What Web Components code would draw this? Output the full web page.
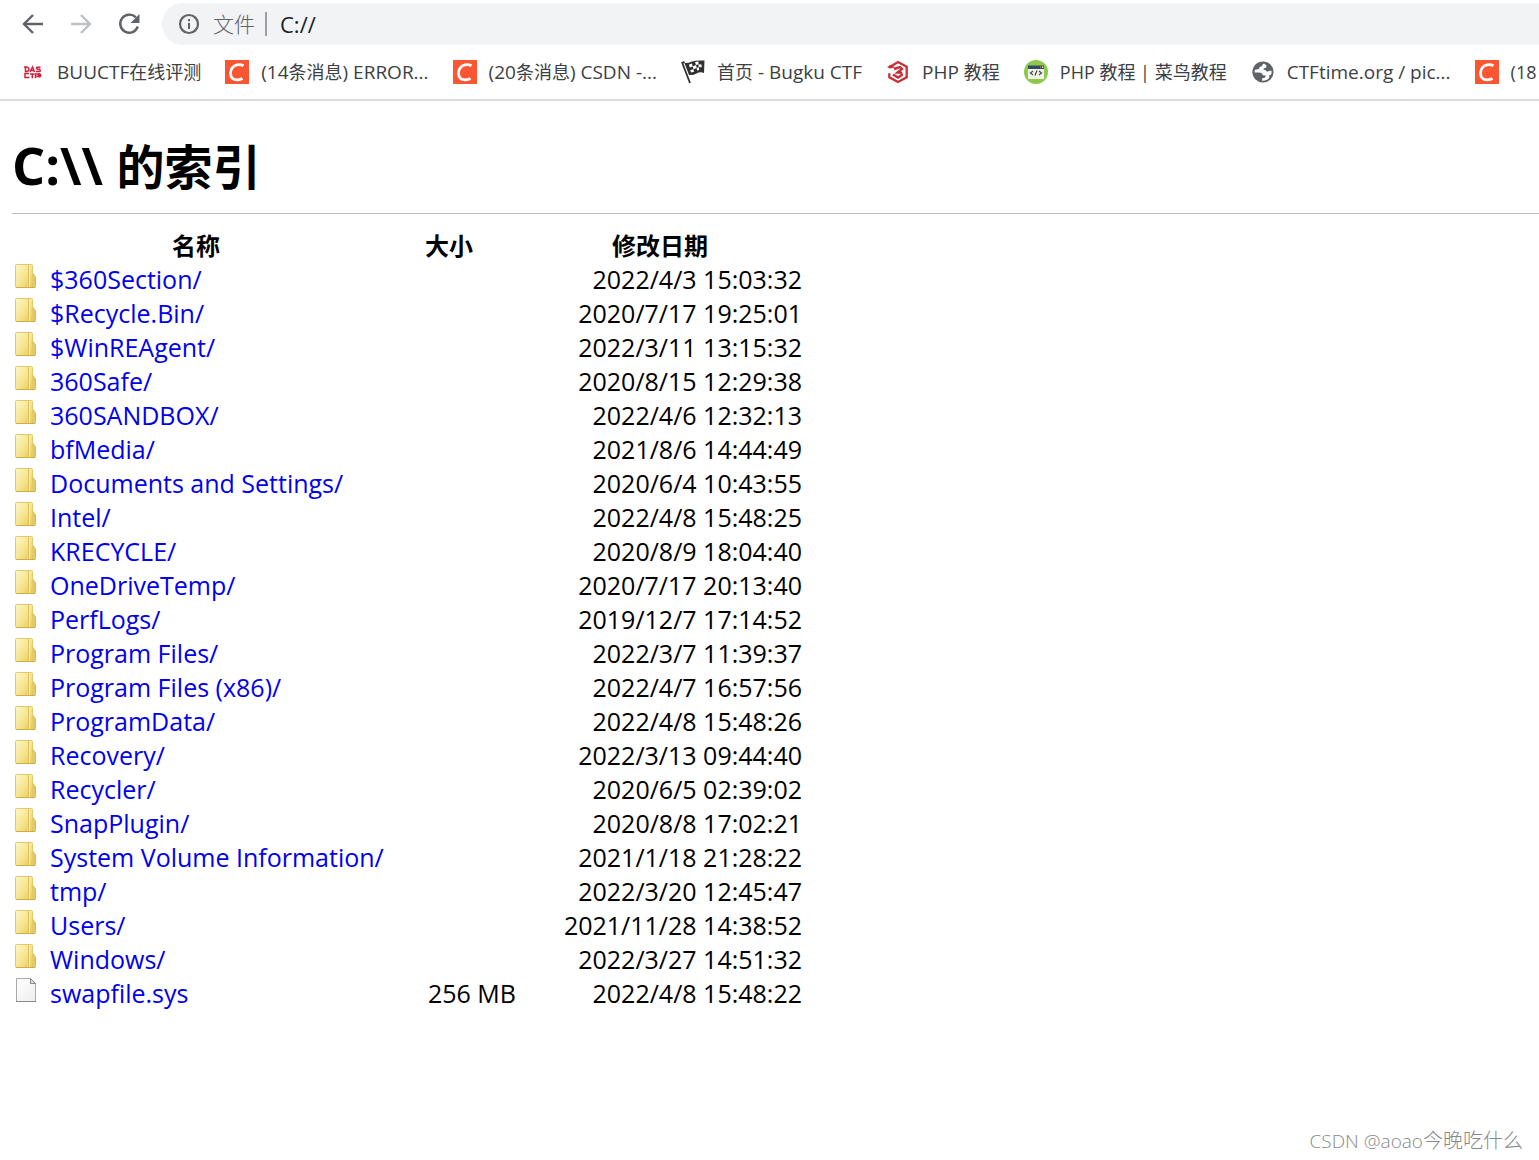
<!DOCTYPE html>
<html lang="zh-CN">
<head>
<meta charset="utf-8">
<title>C:\\ 的索引</title>
<style>
html, body { margin: 0; }
body { background: #fff; color: #000; font-family: "Open Sans", "Noto Sans CJK SC", sans-serif; }
.latin { font-size: 52px; }
.cjk { font-size: 20px; }
bookmark-item span { font-size: 18px; }
</style>
</head>
<body>
<browser-page>
  <browser-toolbar slot="chrome"></browser-toolbar>
  <bookmarks-bar slot="chrome">
    <bookmark-item icon="das">BUUCTF<span>在线评测</span></bookmark-item>
    <bookmark-item icon="csdn">(14<span>条消息</span>) ERROR...</bookmark-item>
    <bookmark-item icon="csdn">(20<span>条消息</span>) CSDN -...</bookmark-item>
    <bookmark-item icon="flag"><span>首页</span> - Bugku CTF</bookmark-item>
    <bookmark-item icon="three">PHP <span>教程</span></bookmark-item>
    <bookmark-item icon="code"><span>PHP 教程 | 菜鸟教程</span></bookmark-item>
    <bookmark-item icon="globe">CTFtime.org / pic...</bookmark-item>
    <bookmark-item icon="csdn"><span>(18</span></bookmark-item>
  </bookmarks-bar>
  <directory-listing><span class="latin">C:\\ </span>的索引</directory-listing>
  <page-watermark slot="footer">CSDN @aoao<span class="cjk">今晚吃什么</span></page-watermark>
</browser-page>
<script>
const define = (name, html) => customElements.define(name, class extends HTMLElement {
  connectedCallback() {
    if (this.shadowRoot) return;
    const root = this.attachShadow({ mode: 'open' });
    root.innerHTML = typeof html === 'function' ? html(this) : html;
  }
});

define('browser-page', `
<style>
:host { display: flex; flex-direction: column; min-height: 100vh; overflow: hidden; }
main { flex: 1; padding: 0 0 0 12px; }
</style>
<header><slot name="chrome"></slot></header>
<main><slot></slot></main>
<slot name="footer"></slot>`);

define('browser-toolbar', `
<style>
:host { display: flex; align-items: center; gap: 19px; padding: 3px 0 0 19px; height: 42px; }
button { border: 0; padding: 0; background: none; width: 28px; height: 28px; color: #5f6368; display: block; }
button:disabled { color: #bdc1c6; }
svg { display: block; }
nav { display: flex; gap: 20px; }
form { flex: 1; display: flex; align-items: center; height: 42px; background: #f1f3f4; border-radius: 21px 0 0 21px; padding-left: 16px; color: #5f6368; font-size: 21px; }
form svg { margin-right: 13px; }
label { line-height: 28px; white-space: nowrap; font-weight: 300; }
i { width: 2px; height: 24px; background: #9aa0a6; margin: 0 13px 0 10px; }
input { flex: 1; min-width: 0; border: 0; padding: 0; background: none; font: inherit; font-size: 22px; color: #202124; outline: 0; height: 28px; }
</style>
<nav>
<button aria-label="后退"><svg width="28" height="28" fill="none" stroke="currentColor" stroke-width="2.4"><path d="M24 14H5.5M14 5l-9 9 9 9"/></svg></button>
<button aria-label="前进" disabled><svg width="28" height="28" fill="none" stroke="currentColor" stroke-width="2.4"><path d="M4 14h18.500M14 5l9 9-9 9"/></svg></button>
<button aria-label="刷新"><svg width="28" height="28" fill="none" stroke="currentColor" stroke-width="2.4"><path d="M22.800 16.500a9 9 0 1 1-2-9"/><path d="M24.500 4v9h-9z" fill="currentColor" stroke="none"/></svg></button>
</nav>
<form>
<svg width="22" height="22" fill="none" stroke="#5f6368"><circle cx="11" cy="11" r="9" stroke-width="2.200"/><path d="M11 10v6M11 6v2.200" stroke-width="2"/></svg>
<label for="url">文件</label><i></i><input id="url" value="C://">
</form>`);

define('bookmarks-bar', `
<style>
:host { display: flex; align-items: center; gap: 24px; height: 54px; padding-left: 21px; border-bottom: 2px solid #dadce0; overflow: hidden; }
</style><slot></slot>`);

const icons = {
  das: `<g fill="none" stroke="#cf1f3c" stroke-width="1.500"><path d="M4.500 7v4.500h1.500q2-.5 2-2.200T6 7H3M9 12l2.500-5L13.500 12M10 10.500h3M19.500 7.300h-3.500q-1 1.700.5 2h2q1.500 1.500 0 2.300H15"/><path d="M8 13.500H4v4h4.500M9 14h4.500M11.300 14v4.200M14.500 18.200V14h4q2 1.200 0 2.500h-3"/></g><circle cx="18.500" cy="15.500" r="2" fill="#cf1f3c"/>`,
  csdn: `<path fill="#fc5531" d="M0 0h24v24H0z"/><path d="M18.500 5.800Q15.500 4 12 4.800 6 6.200 5.500 13q.2 7 7 6.800 2.800 0 5-1.300" fill="none" stroke="#fff" stroke-width="2.800"/>`,
  flag: `<path d="M1.500 3.500 9 23" stroke="#303030" stroke-width="1.800"/><path d="M0 2.500 3 1l1 2-3 1z" fill="#303030"/><path fill="#303030" d="M3.500 3Q8 3 11 1.500T23.500.5L23 13q-4-1.500-7.500.5T8 15z"/><path fill="#fff" d="m8 4.500 3-1 .7 3-3 1zM14 2l3.500-.5v2.700L15 5zM11.700 6.500 15 5l.7 3-3.200 1.300zM17.500 4.200l3 .2.200 2.800-3-.2zM9.300 10l3.200-.7.5 2.500-3 .8zM15.700 8l2-1 .5 3-2.200.5z"/>`,
  three: `<g fill="none" stroke="#c92f36"><path stroke-width="2.300" d="M3 6.300h2L12 2l8.700 4.800v10.500L12 22l-8.700-4.700v-4"/><path stroke-width="2.400" d="M8 9 14 7l2 2-4.500 3.500 3.500.2.800 2.300-3.800 2.500-5-3"/></g><path fill="#c92f36" d="m1 7 4-2 4 2.500-5 1z"/>`,
  code: `<circle cx="12" cy="12" r="12" fill="#8cc84b"/><path fill="#f3f1e4" d="M4 6h16v13H4z"/><path fill="#344b5d" d="M4 5.500h16V9H4z"/><path fill="#f27242" d="M16 6.500h1.300v1.300H16z"/><path fill="#fff" d="M18 6.500h1.300v1.300H18z"/><path d="m9 11-2.500 2L9 15m6-4 2.500 2-2.500 2m-2-4.500-2 5" fill="none" stroke="#344b5d" stroke-width="1.200"/>`,
  globe: `<circle cx="12" cy="12" r="10.600" fill="#5f6368"/><path fill="#fff" d="M13 3.600q-2.300 1-2 2.700-3 .2-2.900 2.600L4 9.700q-.6 1.300-.3 2.800h4.800q2.800.2 3.500 2.700l2.500.3q.5 1.300-.7 2.200l-2.600.5-.2 2.500q5 .3 7.400-3.200l-.2-2.300 2-.7q.6-1.700.3-3.700l-2.700.2q-1 1.200-2.300.2-.8-1.500-2.700-1.200l-.3-1.300 2.700-1.200.3-2z"/>`
};
define('bookmark-item', host => `
<style>
:host { display: block; flex: none; }
a { display: flex; align-items: center; gap: 12px; color: #3c4043; text-decoration: none; white-space: nowrap; font-size: 19px; line-height: 24px; }
svg { display: block; flex: none; }
</style>
<a href="#"><svg width="24" height="24" viewBox="0 0 24 24" aria-hidden="true">${icons[host.getAttribute('icon')]}</svg><span><slot></slot></span></a>`);

const entries = `$360Section/|2022/4/3 15:03:32
$Recycle.Bin/|2020/7/17 19:25:01
$WinREAgent/|2022/3/11 13:15:32
360Safe/|2020/8/15 12:29:38
360SANDBOX/|2022/4/6 12:32:13
bfMedia/|2021/8/6 14:44:49
Documents and Settings/|2020/6/4 10:43:55
Intel/|2022/4/8 15:48:25
KRECYCLE/|2020/8/9 18:04:40
OneDriveTemp/|2020/7/17 20:13:40
PerfLogs/|2019/12/7 17:14:52
Program Files/|2022/3/7 11:39:37
Program Files (x86)/|2022/4/7 16:57:56
ProgramData/|2022/4/8 15:48:26
Recovery/|2022/3/13 09:44:40
Recycler/|2020/6/5 02:39:02
SnapPlugin/|2020/8/8 17:02:21
System Volume Information/|2021/1/18 21:28:22
tmp/|2022/3/20 12:45:47
Users/|2021/11/28 14:38:52
Windows/|2022/3/27 14:51:32
swapfile.sys|2022/4/8 15:48:22|256 MB`.split('\n').map(line => line.split('|'));

const folder = `<svg width="24" height="26" aria-hidden="true"><path d="M17 4.500h1.500V9l3 4v9.500q0 1-1 1H16z" fill="#e6ca60" stroke="#d6b956"/><path d="M1.500 1.500q0-1 1-1h15q1 0 1 1v22h-16q-1 0-1-1z" fill="url(#g)" stroke="#e2c967"/><path d="M14.500 1v22" stroke="#dcc05c"/><path d="M15.500 1v22" stroke="#fbf0ae"/><path d="M2 23.500h19" stroke="#d0ae45"/></svg>`;
const file = `<svg width="24" height="26" aria-hidden="true"><path d="M2.500.5h14l5 5v18h-19z" fill="url(#p)" stroke="#aaa"/><path d="M16.500.5v5h5z" fill="#ddd" stroke="#888"/><path d="M2 23.500h20" stroke="#888"/></svg>`;

define('directory-listing', `
<style>
:host { display: block; }
h1 { margin: 0; padding: 28px 0 10px; font-size: 48px; line-height: 72px; font-weight: 700; border-bottom: 1px solid #bbb; }
table { border-collapse: collapse; table-layout: fixed; width: 792px; margin-top: 16px; font-size: 25px; line-height: 34px; }
th { font-size: 24px; line-height: 32px; font-weight: 700; text-align: center; }
th, td { padding: 0 2px; white-space: nowrap; }
th { padding-right: 4px; }
td + td { text-align: right; }
.size { width: 136px; } .date { width: 286px; }
a { display: flex; gap: 12px; color: #00e; text-decoration: none; }
a svg { flex: none; margin-top: 2px; }
.defs { position: absolute; }
</style>
<svg class="defs" width="0" height="0"><defs>
<linearGradient id="g" x2="1" y2="1"><stop stop-color="#fdf7c5"/><stop offset=".5" stop-color="#f6e592"/><stop offset="1" stop-color="#ebc957"/></linearGradient>
<linearGradient id="p" x2="1" y2="1"><stop stop-color="#fff"/><stop offset="1" stop-color="#eee"/></linearGradient>
</defs></svg>
<h1><slot></slot></h1>
<table>
<colgroup><col><col class="size"><col class="date"></colgroup>
<thead><tr><th scope="col">名称</th><th scope="col">大小</th><th scope="col">修改日期</th></tr></thead>
<tbody>${entries.map(([name, date, size = '']) => `<tr><td><a href="#">${size ? file : folder}<span>${name}</span></a></td><td>${size}</td><td>${date}</td></tr>`).join('')}</tbody>
</table>`);

define('page-watermark', `
<style>
:host { display: block; text-align: right; padding: 0 16px 4px 0; font-weight: 300; font-size: 19px; line-height: 30px; color: #888; }
</style><slot></slot>`);
</script>
</body>
</html>
